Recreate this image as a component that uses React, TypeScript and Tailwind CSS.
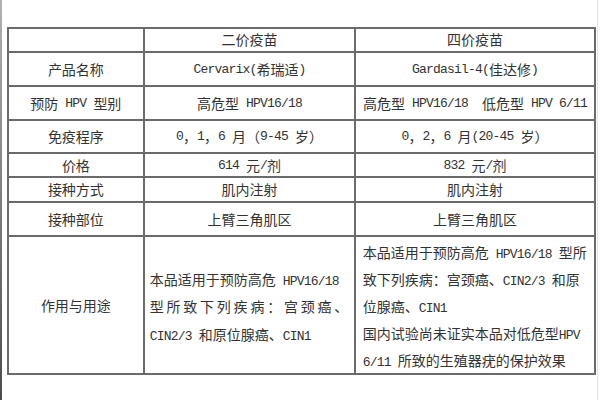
import React from 'react';

const ASCII = /^[\x20-\x7e]+$/;

// SimSun-like look: latin runs half-width (mono squeezed to 0.5em), CJK full-width
const Mixed = ({ text }: { text: string }) => (
  <>
    {text.split(/([\x20-\x7e]+)/).map((part, i) =>
      ASCII.test(part) ? (
        <span key={i} className="font-['Liberation_Mono',monospace] text-[13px] leading-none tracking-[-0.8px]">
          {part}
        </span>
      ) : (
        part
      )
    )}
  </>
);

const rows: [string, string, string][] = [
  ['', '二价疫苗', '四价疫苗'],
  ['产品名称', 'Cervarix(希瑞适)', 'Gardasil-4(佳达修)'],
  ['预防 HPV 型别', '高危型 HPV16/18', '高危型 HPV16/18  低危型 HPV 6/11'],
  ['免疫程序', '0，1，6 月（9-45 岁）', '0，2，6 月(20-45 岁）'],
  ['价格', '614 元/剂', '832 元/剂'],
  ['接种方式', '肌内注射', '肌内注射'],
  ['接种部位', '上臂三角肌区', '上臂三角肌区'],
];

const bivalentUse = ['本品适用于预防高危 HPV16/18', '型所致下列疾病：宫颈癌、', 'CIN2/3 和原位腺癌、CIN1'];
const quadrivalentUse = [
  '本品适用于预防高危 HPV16/18 型所',
  '致下列疾病：宫颈癌、CIN2/3 和原',
  '位腺癌、CIN1',
  '国内试验尚未证实本品对低危型HPV',
  '6/11 所致的生殖器疣的保护效果',
];

export default function App() {
  return (
    <div className="flex h-[400px] w-[600px] overflow-hidden bg-white font-['Noto_Sans_CJK_SC',sans-serif] text-[14px] text-[#333]">
      {/* scanned edge */}
      <div className="h-full w-[2px] bg-linear-to-b from-[#b4b2ac] to-[#4e4c48]" />

      <div className="pl-[5px] pt-[27px]">
        <div className="grid w-fit grid-cols-[134.75px_209.5px_238.5px] grid-rows-[22.75px_32.5px_32.5px_31.5px_22.5px_23.5px_32.5px_136.5px] gap-[1.5px] bg-[#6a6a6a] p-[1.5px]">
          {rows.map(([label, a, b]) => (
            <React.Fragment key={label + a}>
              <div className="flex items-center justify-center whitespace-pre bg-white">
                <Mixed text={label} />
              </div>
              <div className="flex items-center justify-center whitespace-pre bg-white">
                <Mixed text={a} />
              </div>
              <div className="flex items-center justify-center whitespace-pre bg-white">
                <Mixed text={b} />
              </div>
            </React.Fragment>
          ))}

          <div className="flex items-center justify-center bg-white">作用与用途</div>
          <div className="flex flex-col justify-center bg-white pl-[5px] pr-[6px] pt-[4px] leading-[27.5px]">
            {bivalentUse.map((line, i) => (
              <div key={i} className={i === 1 ? 'text-justify [text-align-last:justify]' : ''}>
                <Mixed text={line} />
              </div>
            ))}
          </div>
          <div className="flex flex-col justify-center whitespace-pre bg-white pl-[7px] pt-[2px] leading-[27px]">
            {quadrivalentUse.map((line, i) => (
              <div key={i}>
                <Mixed text={line} />
              </div>
            ))}
          </div>
        </div>
      </div>
      {/* faint edge of the scan on the right */}
      <div className="ml-auto mr-[2px] h-full w-px bg-[#e4e4e4]" />
    </div>
  );
}
